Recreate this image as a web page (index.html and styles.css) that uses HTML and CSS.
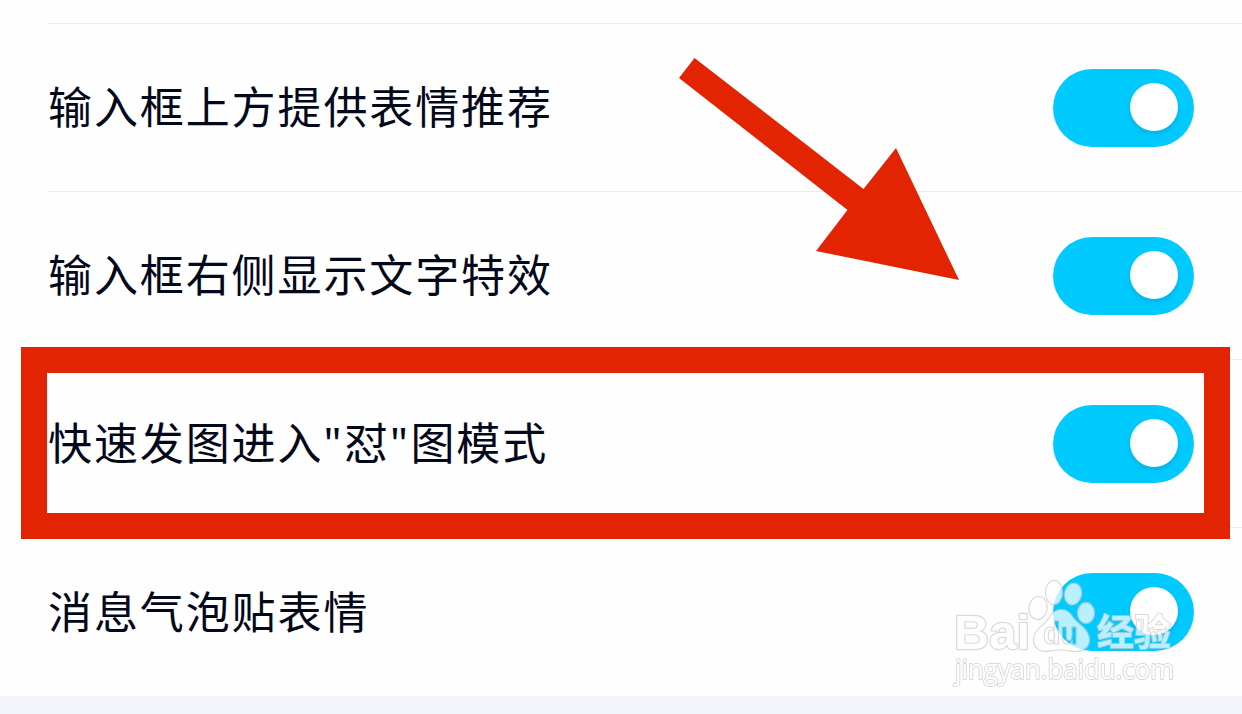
FILE: index.html
```html
<!DOCTYPE html>
<html lang="zh-CN">
<head>
    <meta charset="UTF-8">
    <meta name="viewport" content="width=device-width, initial-scale=1.0">
    <title>表情设置</title>
    <link rel="stylesheet" href="styles.css">
</head>
<body>
    <div class="settings">
        <div class="row-edge"></div>
        <div class="row">
            <span class="label">输入框上方提供表情推荐</span>
            <button class="switch" role="switch" aria-checked="true"><i class="knob"></i></button>
        </div>
        <div class="row">
            <span class="label">输入框右侧显示文字特效</span>
            <button class="switch" role="switch" aria-checked="true"><i class="knob"></i></button>
        </div>
        <div class="row">
            <span class="label">快速发图进入<span class="quote">"</span>怼<span class="quote">"</span>图模式</span>
            <button class="switch" role="switch" aria-checked="true"><i class="knob"></i></button>
            <div class="highlight"></div>
        </div>
        <div class="row">
            <span class="label">消息气泡贴表情</span>
            <button class="switch" role="switch" aria-checked="true"><i class="knob"></i></button>
        </div>
    </div>

    <svg class="arrow" width="282" height="224" viewBox="0 0 282 224">
        <path d="M16.500 0L185.500 131L218 90L281 222L138 193L169.500 152L1 20Z"/>
    </svg>

    <!-- watermark -->
    <svg class="watermark" width="240" height="116" viewBox="0 0 240 116">
        <mask id="cut">
            <rect width="240" height="116" fill="#fff"/>
            <text class="du" x="93" y="64" textLength="35" lengthAdjust="spacingAndGlyphs" fill="#000">du</text>
        </mask>
        <text class="mark bai" x="4" y="69" textLength="76" lengthAdjust="spacingAndGlyphs">Bai</text>
        <g class="mark">
            <ellipse cx="88" cy="28" rx="8.500" ry="11" transform="rotate(8 88 28)"/>
            <ellipse cx="104" cy="12.500" rx="8" ry="11.500"/>
            <ellipse cx="123" cy="14" rx="8" ry="10.500" transform="rotate(12 123 14)"/>
            <ellipse cx="136" cy="33" rx="8" ry="10"/>
            <path mask="url(#cut)" d="M111 30C105 30 102 34 99 39C94 46 84 50 84 60C84 68 91 72 99 70.500C107 69 114 69 121 70.500C130 72 139 69 139 60C139 49 128 45 123 38C120 33 117 30 111 30Z"/>
        </g>
        <text class="du outline" x="93" y="64" textLength="35" lengthAdjust="spacingAndGlyphs">du</text>
        <text class="mark jingyan" x="147" y="66">经验</text>
        <text class="mark url" x="5" y="99" textLength="219" lengthAdjust="spacingAndGlyphs">jingyan.baidu.com</text>
    </svg>
</body>
</html>
```
FILE: styles.css
```css
* {
    box-sizing: border-box;
}

body {
    position: relative;
    margin: 0;
    height: 714px;
    overflow: hidden;
    background: #f4f5fa;
    color: #03081a;
    font-family: "Noto Sans CJK SC", sans-serif;
}

.settings {
    height: 696px;
    padding-left: 48px;
    background: #fefefe;
}

.row-edge {
    height: 24px;
    border-bottom: 1px solid #ebebed;
}

.row {
    position: relative;
    display: flex;
    justify-content: space-between;
    align-items: center;
    height: 168px;
    padding-right: 48px;
    border-bottom: 1px solid #ebebed;
}

.row:last-child {
    border-bottom: none;
}

.label {
    padding-bottom: 5px;
    font-size: 44px;
    line-height: 64px;
    letter-spacing: 1.9px;
    white-space: nowrap;
}

.quote {
    font-family: "Noto Sans", sans-serif;
    line-height: 1;
    letter-spacing: 2.6px;
    vertical-align: 1px;
}

.switch {
    display: flex;
    justify-content: flex-end;
    align-items: center;
    width: 141px;
    height: 78px;
    padding: 0 16px 2px 0;
    border: none;
    border-radius: 39px;
    background: #00caff;
}

.knob {
    width: 48px;
    height: 48px;
    border-radius: 50%;
    background: #fff;
    box-shadow: 0 3px 5px rgba(0, 80, 130, 0.2);
}

.highlight {
    position: absolute;
    top: -13px;
    left: -27px;
    width: 1209px;
    height: 192px;
    border: 26px solid #e22402;
    z-index: 1;
}

.arrow {
    position: absolute;
    top: 58px;
    left: 678px;
    fill: #e22402;
}

.watermark {
    position: absolute;
    top: 580px;
    left: 950px;
    overflow: visible;
    opacity: 0.72;
}

.mark {
    fill: #fff;
    stroke: #cbcbcb;
    stroke-width: 2.4px;
    stroke-linejoin: round;
    paint-order: stroke;
}

.bai {
    font: bold 48px "Liberation Sans", sans-serif;
}

.du {
    font: bold 31px "Liberation Sans", sans-serif;
}

.outline {
    fill: none;
    stroke: #cbcbcb;
    stroke-width: 1.2px;
}

.jingyan {
    font-size: 37px;
    font-weight: 700;
    stroke-width: 2px;
}

.url {
    font: 400 27px "Open Sans", sans-serif;
    stroke-width: 2px;
}
```
